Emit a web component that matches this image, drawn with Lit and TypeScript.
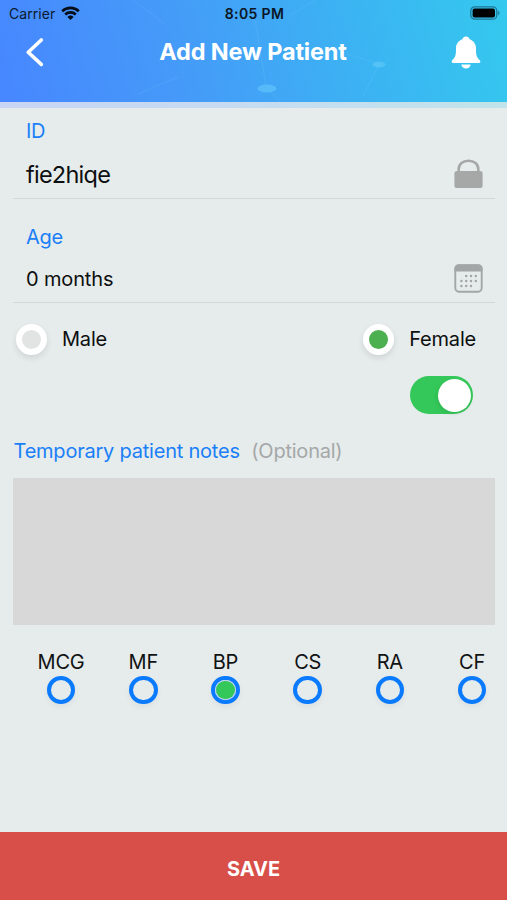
import { LitElement, html, css, svg } from "lit";
import { customElement, property } from "lit/decorators.js";
import { classMap } from "lit/directives/class-map.js";

@customElement("status-bar")
class StatusBar extends LitElement {
  static styles = css`
    :host { display: grid; grid-template-columns: 1fr auto 1fr; align-items: center; height: 28px; padding: 0 7px 0 9px; color: #0b1a2e; font-size: 14px; line-height: 28px; }
    .left { display: flex; align-items: center; gap: 6px; letter-spacing: 0.05px; }
    .time { font-weight: 600; letter-spacing: 0.35px; color: #0a1626; }
    .right { display: flex; justify-content: flex-end; }
    svg { display: block; }
    .wifi { margin-top: -2px; }
    .battery { margin-top: -2px; }
  `;
  render() {
    return html`
      <div class="left">
        <span>Carrier</span>
        <svg class="wifi" width="19" height="14" viewBox="0 0 19 14">
          <g fill="none" stroke="#060d18" stroke-width="2.6">
            <path d="M1.2 5.2A12 12 0 0 1 17.8 5.2" />
            <path d="M4.2 8.5A7.7 7.7 0 0 1 14.8 8.5" />
          </g>
          <path d="M6.4 10.9A4.6 4.6 0 0 1 12.6 10.9L9.5 14Z" fill="#060d18" />
        </svg>
      </div>
      <span class="time">8:05 PM</span>
      <div class="right">
        <svg class="battery" width="30" height="14" viewBox="0 0 30 14">
          <rect x="0.8" y="0.8" width="26" height="12.4" rx="4" fill="none" stroke="#1f7797" stroke-width="1.3" />
          <rect x="2.6" y="2.6" width="22.4" height="8.8" rx="2" fill="#000" />
          <path d="M28.2 4.8C29.9 5.4 29.9 8.6 28.2 9.2Z" fill="#1f7797" />
        </svg>
      </div>
    `;
  }
}

@customElement("nav-bar")
class NavBar extends LitElement {
  static styles = css`
    :host { display: grid; grid-template-columns: 1fr auto 1fr; align-items: center; height: 48px; padding: 0 26px 0 25px; }
    h1 { margin: 0; font-size: 23.5px; line-height: 28px; font-weight: 650; color: #fff; letter-spacing: -0.18px; white-space: nowrap; }
    .bell { justify-self: end; }
    svg { display: block; }
  `;
  render() {
    return html`
      <svg width="20" height="30" viewBox="0 0 20 30"><path d="M16.3 3L3.2 15.2L16.3 27.4" fill="none" stroke="#fff" stroke-width="3.6" stroke-linecap="round" stroke-linejoin="round" /></svg>
      <h1>Add New Patient</h1>
      <svg class="bell" width="30" height="33" viewBox="0 0 30 33">
        <path fill="#fff" d="M15 .4C17 .4 18.2 1.6 18.5 3.2C22.6 4.6 25 8 25 12.4C25 18.5 25.4 20.8 28.6 24C29.9 25.5 29.5 27 27.8 27H2.2C.5 27 .1 25.5 1.4 24C4.6 20.8 5 18.5 5 12.4C5 8 7.4 4.6 11.5 3.2C11.8 1.6 13 .4 15 .4Z" />
        <path fill="#fff" d="M10.3 28.6H19.7C19.2 31.2 17.4 32.6 15 32.6S10.8 31.2 10.3 28.6Z" />
      </svg>
    `;
  }
}

@customElement("option-radio")
class OptionRadio extends LitElement {
  @property() label = "";
  @property({ type: Boolean }) selected = false;
  static styles = css`
    :host { display: flex; flex-direction: column; align-items: center; width: 82.2px; color: #101213; font-size: 20px; line-height: 26px; }
    .ring { box-sizing: border-box; width: 28.6px; height: 28.6px; margin-top: 0.7px; border: 4px solid #0a7aff; border-radius: 50%; padding: 1px; box-shadow: 0 3px 6px rgba(0, 0, 0, 0.05); }
    .dot { width: 100%; height: 100%; border-radius: 50%; }
    .on { background: #34c75a; box-shadow: 0 0 0 1px #b9d3ee; }
  `;
  render() {
    return html`<span>${this.label}</span>
      <div class="ring"><div class=${classMap({ dot: true, on: this.selected })}></div></div>`;
  }
}

@customElement("app-root")
class AppRoot extends LitElement {
  static styles = css`
    :host { display: flex; flex-direction: column; height: 900px; width: 507px; background: #e6ebeb; color: #0d0f10; font-family: Inter, "Liberation Sans", sans-serif; overflow: hidden; }
    header { position: relative; height: 102px; flex: none; background: linear-gradient(74deg, #4786ff 0%, #459bf8 36%, #3cb2f3 68%, #34c9ee 100%); }
    .mesh { position: absolute; inset: 0; }
    .bars { position: relative; }
    .strip { height: 6px; flex: none; background: linear-gradient(90deg, #c8d5f4, #c6dcf1 50%, #c0e4ea); }
    main { flex: 1; display: flex; flex-direction: column; padding: 0 12px 0 13px; }
    .field { box-sizing: border-box; padding: 0 12px 0 13px; border-bottom: 1px solid #d3d7d8; }
    .label { color: #1a7ff8; font-size: 20px; line-height: 26px; letter-spacing: -0.3px; }
    .row { display: flex; align-items: center; justify-content: space-between; }
    .id { height: 91px; padding-top: 10px; }
    .id .row { height: 60px; font-size: 23.5px; }
    .id .value { letter-spacing: -0.75px; }
    .age { height: 104px; padding-top: 25px; }
    .age .row { height: 57px; font-size: 20px; }
    .age .value { letter-spacing: -0.15px; }
    svg { display: block; }
    .sexes { box-sizing: border-box; display: flex; justify-content: space-between; align-items: center; height: 73px; padding: 0 19px 1px 3px; font-size: 20px; letter-spacing: -0.2px; }
    .sex { display: flex; align-items: center; gap: 15px; }
    .radio { box-sizing: border-box; width: 31px; height: 31px; border-radius: 50%; border: 6.5px solid #fff; background: #e2e3e3; box-shadow: 0 3px 6px rgba(0, 0, 0, 0.1); }
    .radio.checked { background: #4caf50; margin-right: 0.5px; }
    .toggle { box-sizing: border-box; align-self: flex-end; width: 63px; height: 38px; margin-right: 22px; padding: 2.5px; border-radius: 19px; background: #34c759; display: flex; justify-content: flex-end; }
    .knob { width: 33px; height: 33px; border-radius: 50%; background: #fff; box-shadow: -1px 2px 4px rgba(0, 0, 0, 0.08); }
    .notes-title { display: flex; gap: 11.5px; margin: 24px 0 0 0.5px; font-size: 20px; line-height: 26px; color: #1a7ff8; white-space: nowrap; letter-spacing: -0.22px; }
    .optional { color: #a5a8a9; }
    .notes { height: 147px; margin-top: 14px; background: #d8d8d8; }
    .options { display: flex; margin: 24px -20px 0 7px; letter-spacing: -0.2px; }
    .save { flex: none; height: 68px; border: 0; padding: 5px 0 0; background: #d84e48; color: #fff; font: 650 20px/26px Inter, "Liberation Sans", sans-serif; }
  `;
  render() {
    const dots = [[1, 0], [2, 0], [3, 0], [0, 1], [1, 1], [2, 1], [3, 1], [0, 2], [1, 2], [2, 2]];
    const options = ["MCG", "MF", "BP", "CS", "RA", "CF"];
    return html`
      <header>
        <svg class="mesh" width="507" height="102" viewBox="0 0 507 102">
          <g fill="none" stroke="#9bdcff" stroke-width="1" opacity="0.13">
            <path d="M133 0L166 25M255 20L266 86L280 102M347 54L379 64L363 96M290 15L316 0M138 94L178 77" />
          </g>
          <g fill="#6bd0fb" opacity="0.5"><ellipse cx="267" cy="88.5" rx="9.5" ry="4" /><ellipse cx="379" cy="64.5" rx="6.5" ry="3" /></g>
        </svg>
        <div class="bars"><status-bar></status-bar><nav-bar></nav-bar></div>
      </header>
      <div class="strip"></div>
      <main>
        <section class="field id">
          <div class="label">ID</div>
          <div class="row">
            <span class="value">fie2hiqe</span>
            <svg width="29" height="30" viewBox="0 0 29 30">
              <path d="M4.7 13V10.2C4.7 5 8.9 1.7 14.5 1.7S24.3 5 24.3 10.2V13" fill="none" stroke="#a6a8a8" stroke-width="2.6" />
              <rect x="0.4" y="12" width="28.2" height="17" rx="2.6" fill="#a6a8a8" />
            </svg>
          </div>
        </section>
        <section class="field age">
          <div class="label">Age</div>
          <div class="row">
            <span class="value">0 months</span>
            <svg width="29" height="29" viewBox="0 0 29 29">
              <rect x="1.3" y="1.3" width="26.4" height="26.4" rx="3.6" fill="none" stroke="#a3a6a6" stroke-width="1.9" />
              <path d="M.5 7.6V4.5A4 4 0 0 1 4.5.5H24.5A4 4 0 0 1 28.5 4.5V7.6Z" fill="#a3a6a6" />
              ${dots.map(([c, r]) => svg`<circle cx=${7.4 + c * 4.8} cy=${12 + r * 5} r="1.25" fill="#a3a6a6" />`)}
            </svg>
          </div>
        </section>
        <div class="sexes">
          <div class="sex"><div class="radio"></div><span>Male</span></div>
          <div class="sex"><div class="radio checked"></div><span>Female</span></div>
        </div>
        <div class="toggle"><div class="knob"></div></div>
        <div class="notes-title"><span>Temporary patient notes</span><span class="optional">(Optional)</span></div>
        <div class="notes"></div>
        <div class="options">
          ${options.map((o) => html`<option-radio .label=${o} ?selected=${o === "BP"}></option-radio>`)}
        </div>
      </main>
      <button class="save">SAVE</button>
    `;
  }
}
